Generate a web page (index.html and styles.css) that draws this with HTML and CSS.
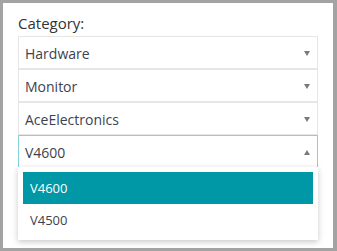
FILE: index.html
```html
<!DOCTYPE html>
<html lang="en">
<head>
  <meta charset="UTF-8" />
  <title>Category</title>
  <link rel="stylesheet" href="styles.css">
</head>
<body>
  <div class="panel">
    <div class="label">Category:</div>
    <div class="select">
      <span class="value">Hardware</span>
      <span class="arrow"></span>
    </div>
    <div class="select">
      <span class="value">Monitor</span>
      <span class="arrow"></span>
    </div>
    <div class="select">
      <span class="value">AceElectronics</span>
      <span class="arrow"></span>
    </div>
    <div class="select-wrap">
      <div class="select focused">
        <span class="value">V4600</span>
        <span class="arrow up"></span>
      </div>
      <ul class="menu">
        <li class="option active">V4600</li>
        <li class="option">V4500</li>
      </ul>
    </div>
  </div>
</body>
</html>
```

FILE: styles.css
```css
body {
  margin: 0;
  padding: 0;
  background-color: #a3a3a3;
  font-family: 'Open Sans', sans-serif;
  color: #444;
}

.panel {
  margin: 3px 4px 0 3px;
  height: 245px;
  background-color: #fff;
  padding: 10px 15px 0 15px;
  box-sizing: border-box;
}

.label {
  font-size: 15px;
  line-height: 20px;
  color: #333;
  margin-bottom: 3px;
}

.select {
  height: 33px;
  box-sizing: border-box;
  border: 1px solid #e6e6e6;
  display: flex;
  align-items: center;
  justify-content: space-between;
  padding: 1px 7px 0 6px;
  font-size: 14px;
  color: #3d4250;
}

.select.focused {
  border-color: #84d3da;
}

.arrow {
  width: 0;
  height: 0;
  border-left: 3.5px solid transparent;
  border-right: 3.5px solid transparent;
  border-top: 5px solid #7a7a7a;
}

.arrow.up {
  border-top: none;
  border-bottom: 5px solid #7a7a7a;
}

.select-wrap {
  position: relative;
}

.menu {
  position: absolute;
  top: 32px;
  left: 0;
  right: 0;
  margin: 0;
  padding: 5px 5px 4px 5px;
  list-style: none;
  background-color: #fff;
  box-shadow: 0 2px 6px rgba(0, 0, 0, 0.22);
}

.option {
  height: 32px;
  display: flex;
  align-items: center;
  padding-left: 7px;
  font-size: 13px;
  color: #3d4250;
}

.option.active {
  background-color: #0097a6;
  color: #fff;
}
```
